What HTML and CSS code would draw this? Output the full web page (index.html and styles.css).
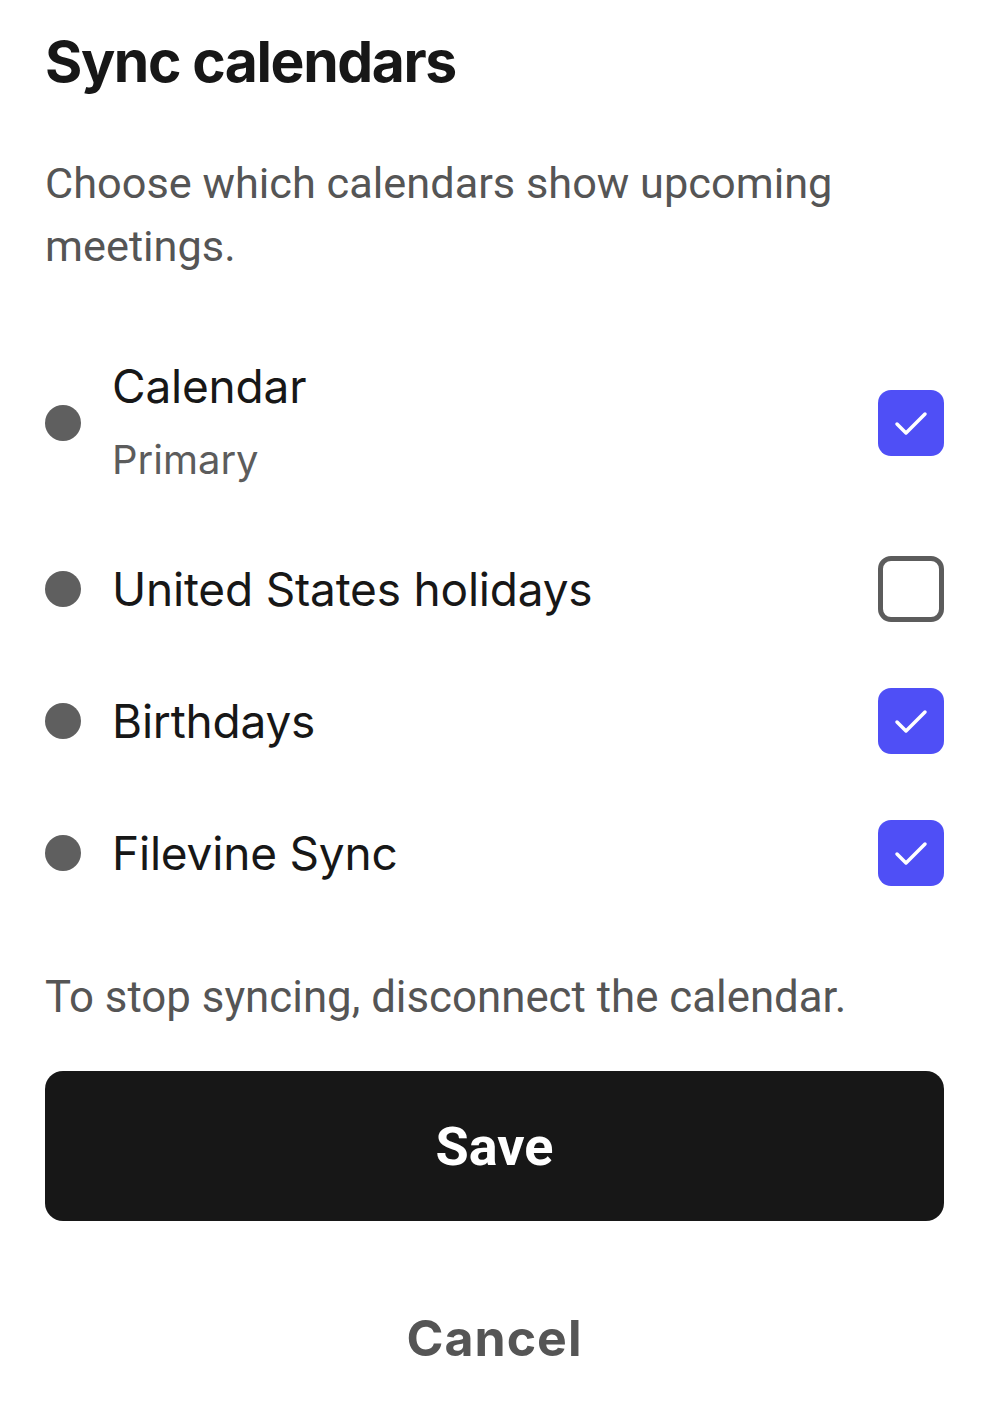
FILE: index.html
```html
<!DOCTYPE html>
<html lang="en">
<head>
    <meta charset="UTF-8">
    <title>Sync calendars</title>
    <link rel="stylesheet" href="styles.css">
</head>
<body>
    <div class="sheet">
        <h1>Sync calendars</h1>
        <p class="intro">Choose which calendars show upcoming meetings.</p>

        <ul class="calendars">
            <li class="cal tall">
                <span class="dot"></span>
                <div class="cal-name">
                    <div class="cal-title">Calendar</div>
                    <div class="cal-sub">Primary</div>
                </div>
                <span class="check on">
                    <svg viewBox="0 0 66 66" width="66" height="66"><path d="M19 34 L28 43 L47 24" fill="none" stroke="#fff" stroke-width="3.5" stroke-linecap="round" stroke-linejoin="round"/></svg>
                </span>
            </li>
            <li class="cal">
                <span class="dot"></span>
                <div class="cal-name">
                    <div class="cal-title">United States holidays</div>
                </div>
                <span class="check"></span>
            </li>
            <li class="cal">
                <span class="dot"></span>
                <div class="cal-name">
                    <div class="cal-title">Birthdays</div>
                </div>
                <span class="check on">
                    <svg viewBox="0 0 66 66" width="66" height="66"><path d="M19 34 L28 43 L47 24" fill="none" stroke="#fff" stroke-width="3.5" stroke-linecap="round" stroke-linejoin="round"/></svg>
                </span>
            </li>
            <li class="cal">
                <span class="dot"></span>
                <div class="cal-name">
                    <div class="cal-title">Filevine Sync</div>
                </div>
                <span class="check on">
                    <svg viewBox="0 0 66 66" width="66" height="66"><path d="M19 34 L28 43 L47 24" fill="none" stroke="#fff" stroke-width="3.5" stroke-linecap="round" stroke-linejoin="round"/></svg>
                </span>
            </li>
        </ul>

        <p class="note">To stop syncing, disconnect the calendar.</p>

        <button class="save">Save</button>
        <button class="cancel">Cancel</button>
    </div>
</body>
</html>
```

FILE: styles.css
```css
body {
    margin: 0;
    background: #fff;
    font-family: Inter, "Noto Sans", sans-serif;
    color: #171717;
}
.sheet {
    padding: 24px 45px 0 45px;
}
h1 {
    margin: 0;
    font-size: 57px;
    font-weight: 700;
    letter-spacing: -1.4px;
    line-height: 76px;
}
.intro {
    margin: 52px 0 0 0;
    font-family: Roboto, sans-serif;
    font-size: 43.3px;
    line-height: 63px;
    color: #555;
    padding-right: 60px;
}
.calendars {
    list-style: none;
    margin: 45px 0 0 0;
    padding: 0;
}
.cal {
    display: flex;
    align-items: center;
    height: 132px;
}
.cal.tall {
    height: 200px;
}
.dot {
    width: 36px;
    height: 36px;
    border-radius: 50%;
    background: #5f5f5f;
    margin-right: 31px;
    flex: none;
}
.cal-name {
    flex: 1;
}
.cal-title {
    font-size: 46px;
    letter-spacing: -0.2px;
    line-height: 60px;
    color: #171717;
}
.cal-sub {
    font-size: 40px;
    line-height: 60px;
    color: #5c5c5c;
    margin-top: 14px;
}
.check {
    width: 66px;
    height: 66px;
    box-sizing: border-box;
    border: 5px solid #5c5c5c;
    border-radius: 13px;
    flex: none;
}
.check.on {
    background: #4f4ff6;
    border: none;
}
.check svg {
    display: block;
}
.note {
    margin: 48px 0 0 0;
    font-family: Roboto, sans-serif;
    font-size: 43.8px;
    line-height: 60px;
    color: #555;
}
.save {
    display: block;
    width: 100%;
    height: 150px;
    margin-top: 44px;
    border: none;
    border-radius: 18px;
    background: #171717;
    color: #fff;
    font-family: Roboto, sans-serif;
    font-size: 54px;
    font-weight: 700;
    cursor: pointer;
}
.cancel {
    display: block;
    width: 100%;
    margin-top: 86px;
    border: none;
    background: none;
    color: #555;
    font-family: Inter, sans-serif;
    font-size: 50px;
    font-weight: 700;
    letter-spacing: 1px;
    cursor: pointer;
}
```
